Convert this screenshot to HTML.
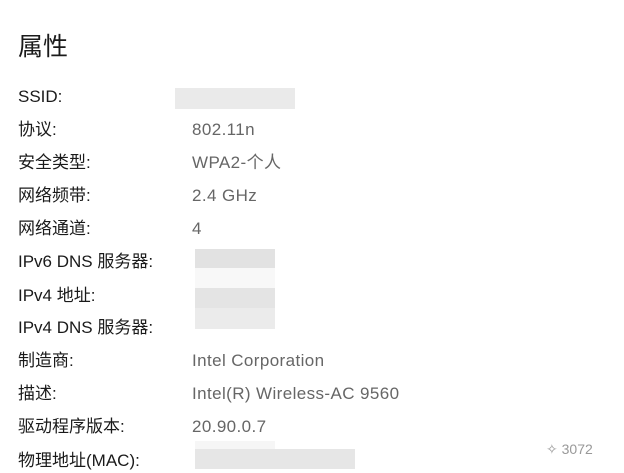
<!DOCTYPE html>
<html><head><meta charset="utf-8"><style>
body{margin:0;width:624px;height:473px;background:#fff;position:relative;overflow:hidden;font-family:"Liberation Sans","Noto Sans CJK SC",sans-serif;}
.t{position:absolute;left:18px;top:27px;font-size:25px;color:#1a1a1a;}
.l,.v{position:absolute;font-size:17px;line-height:20px;white-space:nowrap;}
.l{left:18px;color:#1a1a1a;}
.v{left:192px;color:#666;letter-spacing:0.4px;}
.b{position:absolute;}
</style></head><body>
<div class="t">属性</div>
<div class="l" style="top:87px">SSID:</div>
<div class="l" style="top:120px">协议:</div><div class="v" style="top:120px">802.11n</div>
<div class="l" style="top:153px">安全类型:</div><div class="v" style="top:153px">WPA2-个人</div>
<div class="l" style="top:186px">网络频带:</div><div class="v" style="top:186px">2.4 GHz</div>
<div class="l" style="top:219px">网络通道:</div><div class="v" style="top:219px">4</div>
<div class="l" style="top:252px">IPv6 DNS 服务器:</div>
<div class="l" style="top:286px">IPv4 地址:</div>
<div class="l" style="top:318px">IPv4 DNS 服务器:</div>
<div class="l" style="top:351px">制造商:</div><div class="v" style="top:351px">Intel Corporation</div>
<div class="l" style="top:384px">描述:</div><div class="v" style="top:384px">Intel(R) Wireless-AC 9560</div>
<div class="l" style="top:417px">驱动程序版本:</div><div class="v" style="top:417px">20.90.0.7</div>
<div class="l" style="top:451px">物理地址(MAC):</div>
<div class="b" style="left:175px;top:88px;width:120px;height:21px;background:#eaeaea"></div>
<div class="b" style="left:195px;top:249px;width:80px;height:19px;background:#e2e2e2"></div>
<div class="b" style="left:195px;top:268px;width:80px;height:20px;background:#f8f8f8"></div>
<div class="b" style="left:195px;top:288px;width:80px;height:20px;background:#e4e4e4"></div>
<div class="b" style="left:195px;top:308px;width:80px;height:21px;background:#ebebeb"></div>
<div class="b" style="left:195px;top:449px;width:160px;height:20px;background:#e6e6e6"></div>
<div class="b" style="left:195px;top:441px;width:80px;height:8px;background:#f6f6f6"></div>
<div style="position:absolute;left:546px;top:441px;font-size:14px;color:#999">✧ 3072</div>
</body></html>
